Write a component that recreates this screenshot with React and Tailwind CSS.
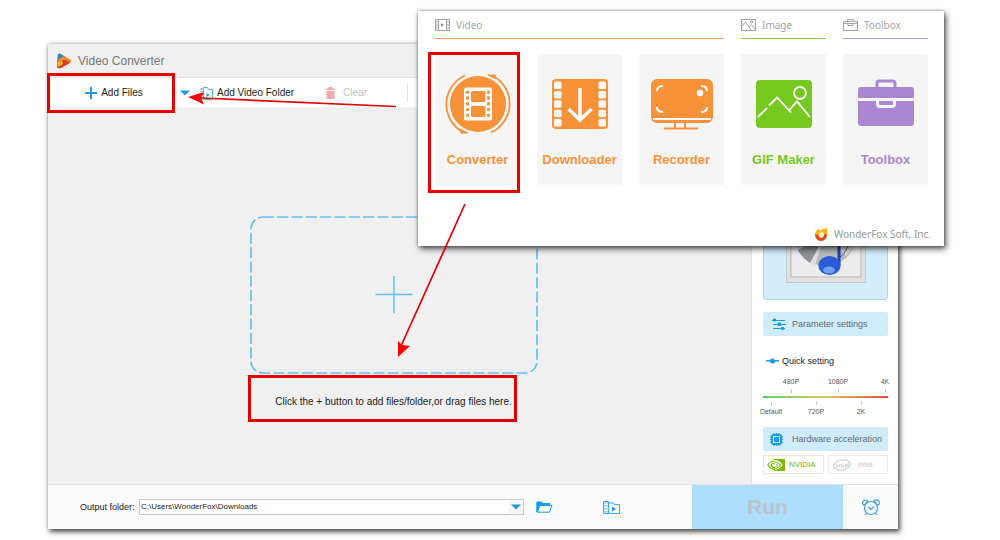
import { useState } from "react";

const tools = [
  { name: "Converter", color: "text-[#f79239]", icon: ConverterIcon, marked: true },
  { name: "Downloader", color: "text-[#f79239]", icon: DownloaderIcon },
  { name: "Recorder", color: "text-[#f79239]", icon: RecorderIcon },
  { name: "GIF Maker", color: "text-[#76c91e]", icon: GifIcon },
  { name: "Toolbox", color: "text-[#ab87d3]", icon: ToolboxIcon },
];

const holes = [0, 1, 2, 3, 4];

function ConverterIcon() {
  return (
    <svg width="66" height="60" viewBox="0 0 66 60" fill="none" stroke="currentColor">
      <circle cx="33" cy="30" r="28" fill="currentColor" stroke="none" />
      <path d="M20 1.500A31.500 31.500 0 0 0 17 57.500M46 58.500A31.500 31.500 0 0 0 49 2.500" strokeWidth="1.8" />
      <path d="M15 55l8 4h-7zM51 5l-8-4h7z" fill="currentColor" strokeWidth="1" />
      <rect x="19" y="13.500" width="28" height="33" rx="2" fill="#fff" stroke="none" />
      <g fill="currentColor" stroke="none">
        <rect x="26" y="17" width="14.500" height="11" rx="1.500" />
        <rect x="26" y="32" width="14.500" height="11" rx="1.500" />
        {holes.map((i) => (
          <g key={i}>
            <rect x="21" y={16.5 + i * 5.8} width="3" height="3.400" rx="1" />
            <rect x="42" y={16.5 + i * 5.8} width="3" height="3.400" rx="1" />
          </g>
        ))}
      </g>
    </svg>
  );
}

function DownloaderIcon() {
  return (
    <svg width="58" height="52" viewBox="0 0 58 52" fill="none">
      <rect x="1" y="1" width="56" height="50" rx="4" fill="currentColor" />
      {holes.map((i) => (
        <g key={i} fill="#f8f8f8">
          <rect x="3" y={3.5 + i * 9.4} width="7.500" height="7.500" rx="1.500" />
          <rect x="47.500" y={3.5 + i * 9.4} width="7.500" height="7.500" rx="1.500" />
        </g>
      ))}
      <path d="M29 10v31M17.500 31L29 42l11.500-11" stroke="#f8f8f8" strokeWidth="3.500" />
    </svg>
  );
}

function RecorderIcon() {
  return (
    <svg width="64" height="52" viewBox="0 0 64 52" fill="none" stroke="currentColor" strokeWidth="2">
      <rect x="2" y="2" width="60" height="42" rx="5" fill="currentColor" />
      <path d="M3 41h58" stroke="#f8f8f8" strokeWidth="1.800" />
      <path d="M25 44v6M35 44v6M14 50.500h34" strokeWidth="2" />
      <path d="M7 13q0-5 6-5M7 29q0 5 6 5M51 8q6 0 6 5M57 29q0 5-6 5" stroke="#f8f8f8" strokeWidth="2.200" />
      <circle cx="50" cy="15" r="3.300" fill="#f8f8f8" stroke="none" />
    </svg>
  );
}

function GifIcon() {
  return (
    <svg width="58" height="50" viewBox="0 0 58 50" fill="none">
      <rect x="1" y="1" width="56" height="48" rx="4" fill="currentColor" />
      <g stroke="#fff" strokeWidth="1.800">
        <path d="M3 38l9-9M14 26.500l8-8 14 15M34 31.500l8-9L55 38" />
        <circle cx="45" cy="14" r="6" />
      </g>
    </svg>
  );
}

function ToolboxIcon() {
  return (
    <svg width="58" height="50" viewBox="0 0 58 50" fill="none">
      <path d="M20 9V4.500Q20 2 22.500 2h13Q38 2 38 4.500V9" stroke="currentColor" strokeWidth="3" />
      <rect x="1" y="8" width="56" height="39" rx="3" fill="currentColor" />
      <path d="M1 20.500h56" stroke="#f8f8f8" strokeWidth="3" />
      <path d="M20.500 21v4q0 2.500 2.500 2.500h12q2.500 0 2.500-2.500v-4" stroke="#f8f8f8" strokeWidth="3" />
    </svg>
  );
}

function GroupTitle({ label, className, children }) {
  return (
    <h2 className={`border-b pt-[6px] pb-[5px] font-['Noto_Sans',sans-serif] text-[10px] leading-4 ${className}`}>
      <span className="flex items-center gap-[6px] text-[#a5a5a5]">
        <svg width="15" height="12" viewBox="0 0 15 12" fill="none" stroke="#a3a3a3">
          {children}
        </svg>
        {label}
      </span>
    </h2>
  );
}

function Launcher() {
  return (
    <section className="absolute top-[11px] right-14 left-[418px] bg-white pr-4 pl-[17px] shadow-[2px_3px_6px_rgba(0,0,0,0.65),0_0_3px_rgba(0,0,0,0.4)]">
      <div className="grid grid-cols-5 gap-x-[17px]">
        <GroupTitle label="Video" className="col-span-3 border-b-[#f5a055]">
          <rect x=".5" y=".5" width="14" height="11" />
          <path d="M3.500 0v12M11.500 0v12" />
          <path d="M1 3h2M1 6h2M1 9h2M12 3h2M12 6h2M12 9h2" />
          <path d="M6 4l3 2-3 2z" fill="#888" stroke="none" />
        </GroupTitle>
        <GroupTitle label="Image" className="border-b-[#88cc44]">
          <rect x=".5" y=".5" width="14" height="11" />
          <path d="M1 7l3.500-4 6 8.500M8 8l2.500-2.500 4 5" />
          <circle cx="10.500" cy="3" r="1.200" />
        </GroupTitle>
        <GroupTitle label="Toolbox" className="border-b-[#b79ad6]">
          <rect x=".5" y="2.500" width="14" height="9" />
          <path d="M4.500 2.500v-2h6v2M1 4.500h13M5 4.500v2h5v-2" />
        </GroupTitle>
      </div>

      <div className="mt-[15px] grid grid-cols-5 gap-x-[17px]">
        {tools.map(({ name, color, icon: Icon, marked }) => (
          <button key={name} className={`relative flex h-[131px] flex-col items-center rounded-[2px] bg-[#f5f5f5] ${color}`}>
            <span className="flex h-[100px] items-center justify-center">
              <Icon />
            </span>
            <span className="text-[13px] leading-3 font-bold">{name}</span>
            {marked && <span className="absolute -top-[2px] right-0 -bottom-2 -left-[7px] border-[3px] border-[#e60000]" />}
          </button>
        ))}
      </div>

      <div className="-mr-[3px] mt-10 flex h-[21px] items-center justify-end gap-[6px] pb-1 font-['Noto_Sans',sans-serif] text-[10px] leading-4 text-[#999]">
        <svg width="14" height="14" viewBox="0 0 14 14">
          <path d="M1 8Q1 3.500 5 2l1 1.500Q8 3 9 1.500 12 3 12.500 0q1.500 6 .5 9-2 5-6 5-5 0-6-6z" fill="#f9b21c" />
          <path d="M1 7.500Q2 14 7 14q5-.5 6-6l-2-1-7 1z" fill="#e4441c" />
          <ellipse cx="7.500" cy="8" rx="2.500" ry="3" transform="rotate(30 7.500 8)" fill="#fff3d8" />
        </svg>
        WonderFox Soft, Inc.
      </div>
    </section>
  );
}

function Caret() {
  return (
    <svg width="10" height="6" viewBox="0 0 10 6">
      <path d="M0 .5h10L5 5.500z" fill="#1b9be8" />
    </svg>
  );
}

function Toolbar() {
  return (
    <div className="flex h-[30px] items-center border-t border-[#e2e2e2] bg-white text-[10px] leading-4 text-[#222]">
      <div className="relative flex w-[126px] justify-center pl-[6px]">
        <button className="flex items-center gap-1">
          <svg width="12" height="12" viewBox="0 0 12 12" stroke="#1b9be8" strokeWidth="2">
            <path d="M6 0v12M0 6h12" />
          </svg>
          Add Files
        </button>
        <span className="pointer-events-none absolute -inset-x-[1px] -inset-y-3 border-[3px] border-[#e60000]" />
      </div>
      <button aria-label="More ways to add" className="ml-[6px]">
        <Caret />
      </button>
      <button className="ml-[10px] flex items-center gap-1">
        <svg width="13" height="14" viewBox="0 0 13 14" fill="none" stroke="#4db4ee">
          <path d="M3.500 13.500h9v-10h-4l-1-2h-4z" />
          <path d="M1.500 2v12" strokeWidth="2" strokeDasharray="1.500 1" />
          <path d="M6.500 7l3 2-3 2z" fill="#1b9be8" stroke="none" />
        </svg>
        Add Video Folder
      </button>
      <button disabled className="ml-8 flex items-center gap-2 text-[#c4c4c4]">
        <svg width="9" height="12" viewBox="0 0 9 12" fill="#f3aaaa">
          <path d="M0 1.500h2.500V0h4v1.500H9V3H0zM.5 4h8v8h-8z" />
        </svg>
        Clear
      </button>
      <span className="ml-10 h-[18px] w-px bg-[#e4e4e4]" />
    </div>
  );
}

function DropArea() {
  return (
    <div className="flex flex-1 flex-col items-center bg-[#f0f0f0] pt-[109px] pr-3">
      <button aria-label="Add files or folder">
        <svg width="288" height="158" viewBox="0 0 288 158" fill="none" stroke="#63bff3">
          <rect x="1" y="1" width="286" height="156" rx="12" strokeWidth="1.700" strokeDasharray="11 3.300" />
          <path d="M144 60v37M125.500 78.500h37" strokeWidth="1.500" />
        </svg>
      </button>
      <p className="relative mt-5 text-[10px] leading-4 whitespace-nowrap text-[#222]">
        Click the + button to add files/folder,or drag files here.
        <span className="absolute -top-[19px] -right-[5px] -bottom-3 -left-[27px] border-[3px] border-[#e60000]" />
      </p>
    </div>
  );
}

function ScaleLabels({ labels, below }) {
  return labels.map((label) => (
    <span key={label} className={`flex w-6 items-center gap-[2px] ${below ? "flex-col-reverse" : "flex-col"}`}>
      <span className="leading-[10px]">{label}</span>
      <span className="h-1 w-px bg-[#c8c8c8]" />
    </span>
  ));
}

function SidePanel() {
  const [quality, setQuality] = useState(0);

  return (
    <aside className="w-[147px] border-l border-[#e4e4e4] bg-white pt-2 pr-[10px] pb-[10px] pl-[11px]">
      {/* Output format */}
      <button aria-label="Output format" className="flex h-[185px] w-full items-end justify-center rounded-[3px] border border-[#9fdcf8] bg-[#d3edfc] pb-4">
        <svg width="80" height="80" viewBox="0 0 80 80">
          <rect x=".5" y=".5" width="79" height="79" fill="#dfe1e3" stroke="#c3c8cc" />
          <rect x="5" y="5" width="70" height="69" fill="#ececec" stroke="#b5b8ba" />
          <circle cx="39" cy="32" r="31" fill="#b9bcbf" />
          <path d="M39 32L9 40q5 16 20 22zM39 32l31-3q0 15-10 24z" fill="#dcdee0" />
          <path d="M39 32L12 47q5 9 12 13z" fill="#8e9194" />
          <circle cx="39" cy="32" r="9" fill="#eee" />
          <path d="M53 26q2 12 9 17-4 9-8 11" fill="none" stroke="#556" strokeWidth="1" />
          <path d="M53 20v42" stroke="#1d43ad" strokeWidth="3" />
          <ellipse cx="43.500" cy="62.500" rx="11" ry="9.500" fill="#2b5cd6" />
          <ellipse cx="43" cy="67" rx="6" ry="3.500" fill="#6da1f2" />
        </svg>
      </button>

      <button className="mt-3 flex h-6 w-full items-center gap-[6px] rounded-[2px] bg-[#d0ebfa] pl-[9px] text-[9px] leading-3 text-[#5c6b75]">
        <svg width="14" height="13" viewBox="0 0 14 13" stroke="#1b9be8" fill="#1b9be8">
          <path d="M0 2.500h13M1 6.500h13M1 10.500h12" />
          <path d="M1.500 1h2v2h-2zM6 5h2.500v2.500H6zM9.500 9.500h2v2h-2z" />
        </svg>
        Parameter settings
      </button>

      {/* Quick setting */}
      <label htmlFor="quality" className="mt-[18px] flex items-center gap-[3px] pl-[3px] text-[9px] leading-[14px] text-[#222]">
        <svg width="13" height="6" viewBox="0 0 13 6" fill="#1b9be8">
          <path d="M0 2h13v1.500H0z" />
          <circle cx="6.500" cy="3" r="2.600" />
        </svg>
        Quick setting
      </label>
      <div className="mt-[9px] text-[7px] text-[#555]">
        <div className="-mr-[9px] flex justify-between pl-4">
          <ScaleLabels labels={["480P", "1080P", "4K"]} />
        </div>
        <input
          id="quality"
          type="range"
          min="0"
          max="5"
          value={quality}
          onChange={(e) => setQuality(Number(e.target.value))}
          className="my-[3px] block h-[2px] w-full appearance-none bg-linear-to-r from-[#4fd06a] via-[#d9c65a] to-[#e04a3c] [&::-webkit-slider-thumb]:appearance-none [&::-webkit-slider-thumb]:opacity-0"
        />
        <div className="-ml-1 flex justify-between pr-[15px]">
          <ScaleLabels labels={["Default", "720P", "2K"]} below />
        </div>
      </div>

      <button className="mt-[10px] flex h-6 w-full items-center gap-[9px] rounded-[2px] bg-[#d0ebfa] pl-[7px] text-[9px] leading-3 whitespace-nowrap text-[#5c6b75]">
        <svg width="13" height="13" viewBox="0 0 13 13" fill="none" stroke="#1b9be8">
          <rect x="2" y="2" width="9" height="9" rx="1.500" strokeWidth="2" />
          <rect x="4.500" y="4.500" width="4" height="4" fill="#1b9be8" />
          <path d="M4 0v2M6.500 0v2M9 0v2M4 11v2M6.500 11v2M9 11v2M0 4h2M0 6.500h2M0 9h2M11 4h2M11 6.500h2M11 9h2" />
        </svg>
        Hardware acceleration
      </button>
      <div className="mt-1 grid grid-cols-2 gap-1 text-[8px] leading-3">
        <span className="flex h-[19px] items-center gap-1 border border-[#e3eed6] pl-[3px] text-[#6bb01c]">
          <svg width="18" height="12" viewBox="0 0 18 12" fill="none">
            <path d="M7 0h11v12H7z" fill="#76b900" />
            <path d="M7 2Q3 2.500 .8 5.500 3 10 8 10.500M7 4Q4.500 4.500 4 6q1 2.500 4.500 3" stroke="#76b900" strokeWidth="1.200" />
            <path d="M7 2q5-.5 8 4-3 4-7 4.500M7 4q3.500-.3 5 2-1.500 2.500-4 3" stroke="#fff" strokeWidth="1.200" />
            <circle cx="8" cy="6.200" r="1.600" fill="#fff" />
          </svg>
          NVIDIA
        </span>
        <span className="flex h-[19px] items-center gap-[7px] border border-[#ededed] pl-1 text-[#c4c4c4]">
          <svg width="18" height="12" viewBox="0 0 18 12" fill="none" stroke="#c8c8c8">
            <ellipse cx="9" cy="6" rx="8.200" ry="5" transform="rotate(-10 9 6)" />
            <path d="M4 5v3.500M6 8.500V6q1.500-1.500 2.500 0v2.500M10 4v3.500q0 1 1 1M12 7h2q-.3-2-1.500-1.500T13 8.500M15 3.500v4" strokeWidth=".9" />
          </svg>
          Intel
        </span>
      </div>
    </aside>
  );
}

function Footer() {
  return (
    <footer className="flex h-[45px] items-center border-t border-[#e2e2e2] bg-[#fafafa] pl-8">
      <label htmlFor="output" className="w-[59px] text-[9px] leading-4 whitespace-nowrap text-[#222]">
        Output folder:
      </label>
      <div className="relative flex-1">
        <select
          id="output"
          className="block h-4 w-full appearance-none border border-[#c8c8c8] bg-white pl-px text-[8px] leading-3 text-[#222]"
        >
          <option>C:\Users\WonderFox\Downloads</option>
        </select>
        <span className="pointer-events-none absolute inset-y-px right-px flex w-[14px] items-center justify-center bg-[#f5f5f5]">
          <Caret />
        </span>
      </div>
      <button aria-label="Open output folder" className="ml-3">
        <svg width="17" height="12" viewBox="0 0 17 12" fill="none" stroke="#1b9be8">
          <path d="M.8 11V1h5l1 1.500h7v2H4z" fill="#1b9be8" />
          <path d="M1.500 11.200L4 4.500h12l-2.500 6.700z" fill="#fafafa" />
        </svg>
      </button>
      <button aria-label="Open converted videos" className="ml-[50px]">
        <svg width="17" height="13" viewBox="0 0 17 13" fill="none" stroke="#3aa8ea">
          <path d="M.5.5h5v12h-5zM5.500 12.500h11V3.500h-5l-1-1.500h-5" />
          <path d="M2 1v12M4 1v12" strokeDasharray="1.500 1.500" />
          <path d="M9 5.500l4 2.500-4 2.500z" fill="#1b9be8" stroke="none" />
        </svg>
      </button>
      <button disabled className="ml-[72px] h-full w-[151px] bg-[#addefb] text-[21px] font-bold text-[#b9c5cd]">
        Run
      </button>
      <button aria-label="Schedule" className="flex w-[55px] justify-center">
        <svg width="18" height="17" viewBox="0 0 18 17" fill="none" stroke="#3f9fe6" strokeWidth="1.200">
          <circle cx="9" cy="9" r="6.500" />
          <path d="M1.500 6a2.800 2.800 0 1 1 4.500-4L3.500 5zM16.500 6a2.800 2.800 0 1 0-4.500-4l2.500 3zM6 8l3 2.500L12 7.500M4.500 14L3 16M13.500 14l1.500 2" />
        </svg>
      </button>
    </footer>
  );
}

export default function App() {
  return (
    <div className="relative min-h-screen bg-white pt-11 pr-[102px] pb-[11px] pl-12 font-['Liberation_Sans',Arial,sans-serif]">
      <main className="shadow-[2px_3px_5px_rgba(0,0,0,0.65),0_0_4px_rgba(0,0,0,0.3)]">
        <header className="flex h-[33px] items-center gap-[6px] bg-[#f0f0f0] pl-2">
          <svg width="16" height="16" viewBox="0 0 16 16">
            <path d="M2 1q1-1 3 0l6 4L1 8z" fill="#2f86c8" />
            <path d="M1 7l7-4 7 4q1 1 0 2l-6 3z" fill="#f08a24" />
            <path d="M1 8l9-1 4 3-9 5q-3 1-4-1z" fill="#d9402a" />
            <path d="M1 9l5-2 1 4-5 3z" fill="#f5b02e" />
          </svg>
          <h1 className="text-[12px] leading-4 text-[#777]">Video Converter</h1>
        </header>
        <Toolbar />
        <div className="flex">
          <DropArea />
          <SidePanel />
        </div>
        <Footer />
      </main>

      <Launcher />

      {/* Arrows from one step to the next */}
      <svg className="pointer-events-none absolute top-0 left-0" width="520" height="400" viewBox="0 0 520 400" stroke="#e60000" strokeWidth="1.700" aria-hidden="true">
        <path d="M396 106.500L201 98M465 204l-64 142" />
        <path d="M188 97l16-5-3 6 3 6.500zM398 357v-16l4 4 8 1z" fill="#f00" stroke="none" />
      </svg>
    </div>
  );
}
